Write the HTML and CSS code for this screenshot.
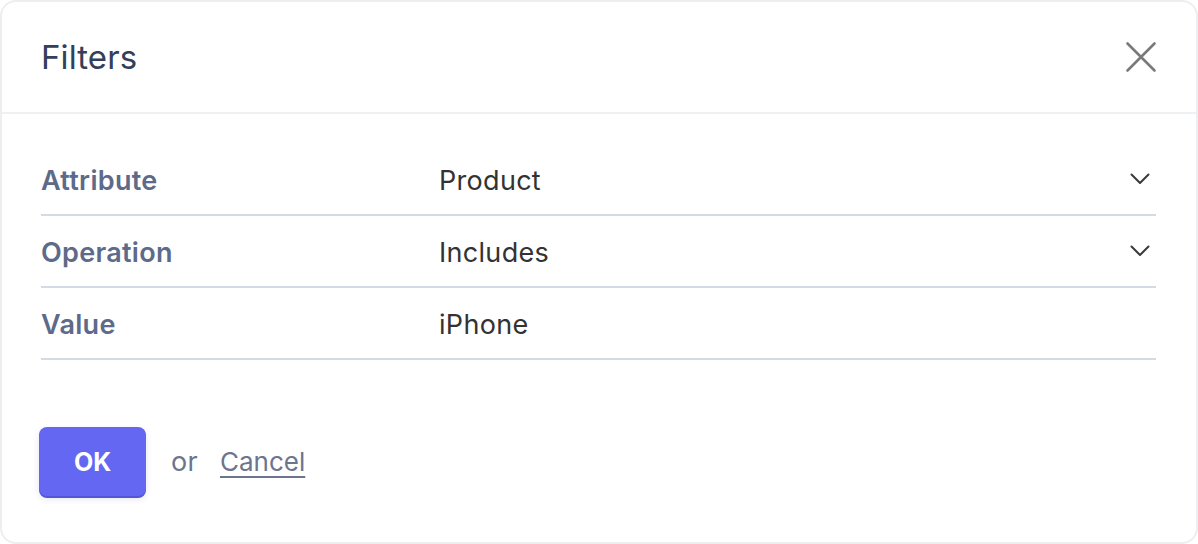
FILE: index.html
```html
<!DOCTYPE html>
<html lang="en">
<head>
<meta charset="utf-8">
<title>Filters</title>
<link rel="stylesheet" href="styles.css">
</head>
<body>
<div class="card">
  <header class="card-header">
    <h1 class="title">Filters</h1>
    <button class="close" aria-label="Close">
      <svg width="32" height="32" viewBox="0 0 32 32"><path d="M2.5 2.5 L29.5 29.5 M29.5 2.5 L2.5 29.5" stroke="#7a7a7a" stroke-width="2.6" stroke-linecap="round" fill="none"/></svg>
    </button>
  </header>
  <div class="card-body">
    <div class="row">
      <div class="label">Attribute</div>
      <div class="value">Product</div>
      <svg class="chev" width="20" height="12" viewBox="0 0 20 12"><path d="M1.5 1.5 L10 10 L18.5 1.5" stroke="#3a3a3a" stroke-width="2" fill="none" stroke-linecap="round" stroke-linejoin="round"/></svg>
    </div>
    <div class="row">
      <div class="label">Operation</div>
      <div class="value">Includes</div>
      <svg class="chev" width="20" height="12" viewBox="0 0 20 12"><path d="M1.5 1.5 L10 10 L18.5 1.5" stroke="#3a3a3a" stroke-width="2" fill="none" stroke-linecap="round" stroke-linejoin="round"/></svg>
    </div>
    <div class="row">
      <div class="label">Value</div>
      <div class="value">iPhone</div>
    </div>
    <div class="actions">
      <button class="ok">OK</button>
      <span class="or">or</span>
      <a class="cancel" href="#">Cancel</a>
    </div>
  </div>
</div>
</body>
</html>
```
FILE: styles.css
```css
* { box-sizing: border-box; }
html, body { margin: 0; padding: 0; background: #ffffff; }
body { font-family: Inter, "Noto Sans", sans-serif; }
.card {
  width: 1198px;
  height: 544px;
  border: 2px solid #eceeef;
  border-radius: 16px;
  background: #fff;
  overflow: hidden;
}
.card-header {
  height: 112px;
  display: flex;
  align-items: center;
  justify-content: space-between;
  padding: 0 39px 0 39px;
  border-bottom: 2px solid #eef0f2;
}
.title {
  margin: 0;
  font-size: 33px;
  font-weight: 400;
  color: #334059;
  letter-spacing: 0.1px;
}
.close {
  background: none;
  border: 0;
  padding: 0;
  width: 32px;
  height: 32px;
  display: flex;
  cursor: pointer;
}
.card-body {
  padding: 30px 40px 0 39px;
}
.row {
  height: 72px;
  display: flex;
  align-items: center;
  border-bottom: 2px solid #d2dbe4;
  padding-top: 2px;
}
.label {
  width: 398px;
  font-size: 27px;
  font-weight: 600;
  color: #5d6a89;
  letter-spacing: 0.3px;
}
.value {
  flex: 1;
  font-size: 27px;
  color: #333333;
  letter-spacing: 0.3px;
}
.chev { margin-right: 6px; margin-top: -2px; }
.actions {
  display: flex;
  align-items: center;
  padding-top: 67px;
}
.ok {
  width: 107px;
  height: 69px;
  margin-left: -2px;
  border: 0;
  border-radius: 8px;
  background: #6467f2;
  color: #fff;
  font-family: Inter, sans-serif;
  font-size: 25px;
  font-weight: 700;
  box-shadow: 0 2px 0 #5356d6, 0 3px 6px rgba(80, 80, 160, 0.15);
}
.or {
  margin-left: 25px;
  font-size: 27px;
  color: #6b7590;
  letter-spacing: 0.3px;
}
.cancel {
  margin-left: 22px;
  font-size: 26px;
  color: #6b7590;
  text-decoration: underline;
  text-underline-offset: 5px;
  text-decoration-thickness: 2px;
}
```
